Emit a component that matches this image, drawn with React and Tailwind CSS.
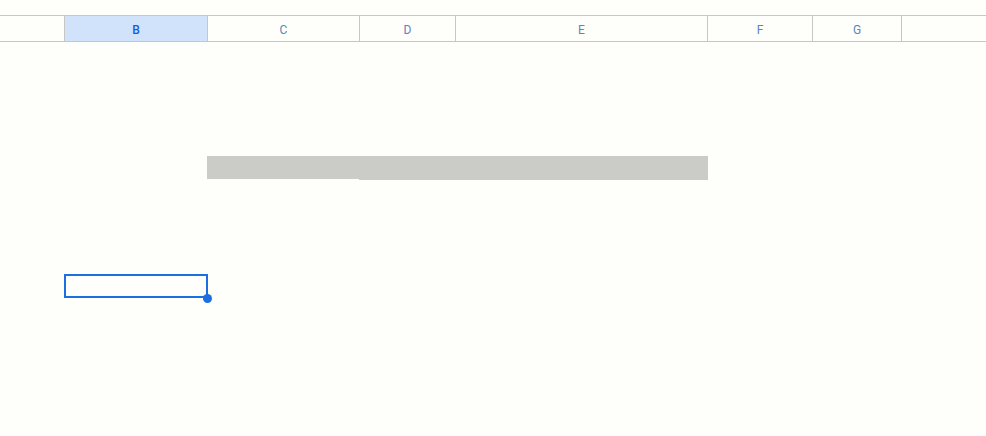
import React from 'react';

const cols = [
  { key: 'A', w: 'w-[64px]', label: '' },
  { key: 'B', w: 'w-[143px]', label: 'B', active: true },
  { key: 'C', w: 'w-[152px]', label: 'C' },
  { key: 'D', w: 'w-[96px]', label: 'D' },
  { key: 'E', w: 'w-[252px]', label: 'E' },
  { key: 'F', w: 'w-[105px]', label: 'F' },
  { key: 'G', w: 'w-[89px]', label: 'G' },
];

export default function App() {
  return (
    <div className="w-[986px] h-[436px] bg-[#fefefa] overflow-hidden font-['Roboto',sans-serif]">
      <div className="h-[15px]" />

      {/* column header */}
      <div className="flex h-[27px] border-y border-[#c6c6c3]">
        {cols.map((c, i) => (
          <div
            key={c.key}
            className={`${c.w} shrink-0 flex items-center justify-center pt-[2px] text-[12px] ${i > 0 ? 'border-l border-[#c6c6c3]' : ''} ${
              c.active ? 'bg-[#d1e3fb] text-[#1260d6] font-medium' : 'text-[#5b84c2]'
            }`}
          >
            {c.label}
          </div>
        ))}
        <div className="flex-1 border-l border-[#c6c6c3]" />
      </div>

      <div className="h-[114px]" />

      {/* grey merged band */}
      <div className="flex items-start">
        <div className="w-[207px] shrink-0" />
        <div className="w-[152px] h-[23px] bg-[#cbcbc8]" />
        <div className="w-[349px] h-[24px] bg-[#cbcbc8]" />
      </div>

      <div className="h-[94px]" />

      {/* selected cell */}
      <div className="flex">
        <div className="w-[64px] shrink-0" />
        <div className="relative w-[144px] h-[24px] border-2 border-[#1a6fe3]">
          <div className="absolute -right-[6px] -bottom-[7px] w-[9px] h-[9px] rounded-full bg-[#1a6fe3]" />
        </div>
      </div>
    </div>
  );
}
